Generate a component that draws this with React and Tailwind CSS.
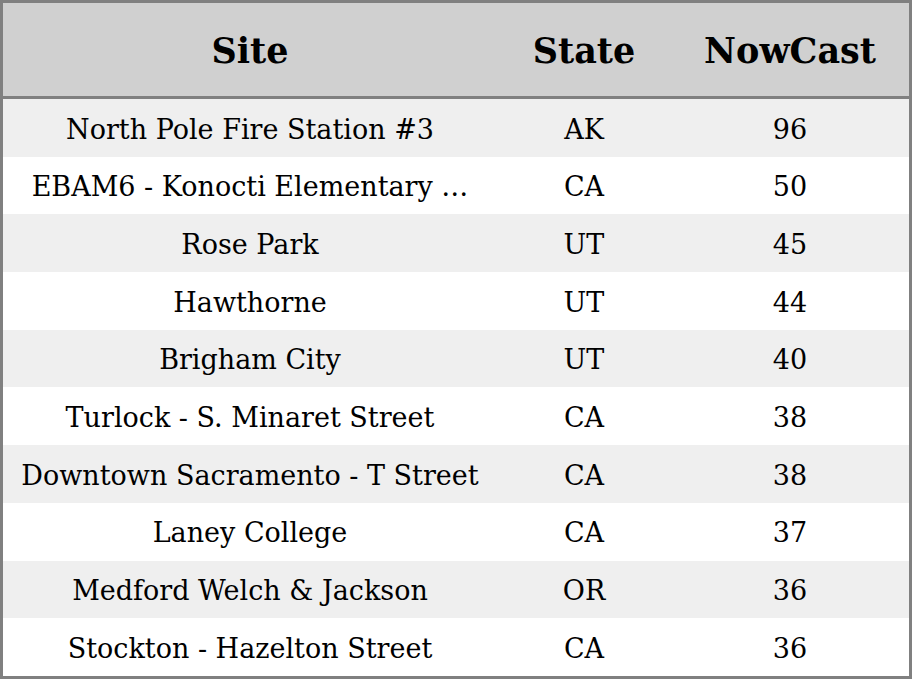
import React from 'react';

const rows = [
  ['North Pole Fire Station #3', 'AK', 96],
  ['EBAM6 - Konocti Elementary …', 'CA', 50],
  ['Rose Park', 'UT', 45],
  ['Hawthorne', 'UT', 44],
  ['Brigham City', 'UT', 40],
  ['Turlock - S. Minaret Street', 'CA', 38],
  ['Downtown Sacramento - T Street', 'CA', 38],
  ['Laney College', 'CA', 37],
  ['Medford Welch & Jackson', 'OR', 36],
  ['Stockton - Hazelton Street', 'CA', 36],
];

const App = () => {
  return (
    <div className="w-[912px] h-[679px] border-[3px] border-[#808080] bg-white text-black font-['DejaVu_Serif',serif] overflow-hidden">
      {/* Header */}
      <div className="grid grid-cols-[494px_174px_1fr] h-[96px] pt-[4px] bg-[#d0d0d0] border-b-[3px] border-[#808080] items-center text-[35px] font-bold">
        <div className="text-center">Site</div>
        <div className="text-center">State</div>
        <div className="text-center">NowCast</div>
      </div>

      {/* Rows */}
      {rows.map(([site, state, value], i) => (
        <div
          key={i}
          className={`grid grid-cols-[494px_174px_1fr] h-[57.7px] pt-[4px] items-center text-[27px] ${i % 2 === 0 ? 'bg-[#efefef]' : 'bg-white'}`}
        >
          <div className="text-center whitespace-nowrap">{site}</div>
          <div className="text-center">{state}</div>
          <div className="text-center">{value}</div>
        </div>
      ))}
    </div>
  );
};

export default App;
